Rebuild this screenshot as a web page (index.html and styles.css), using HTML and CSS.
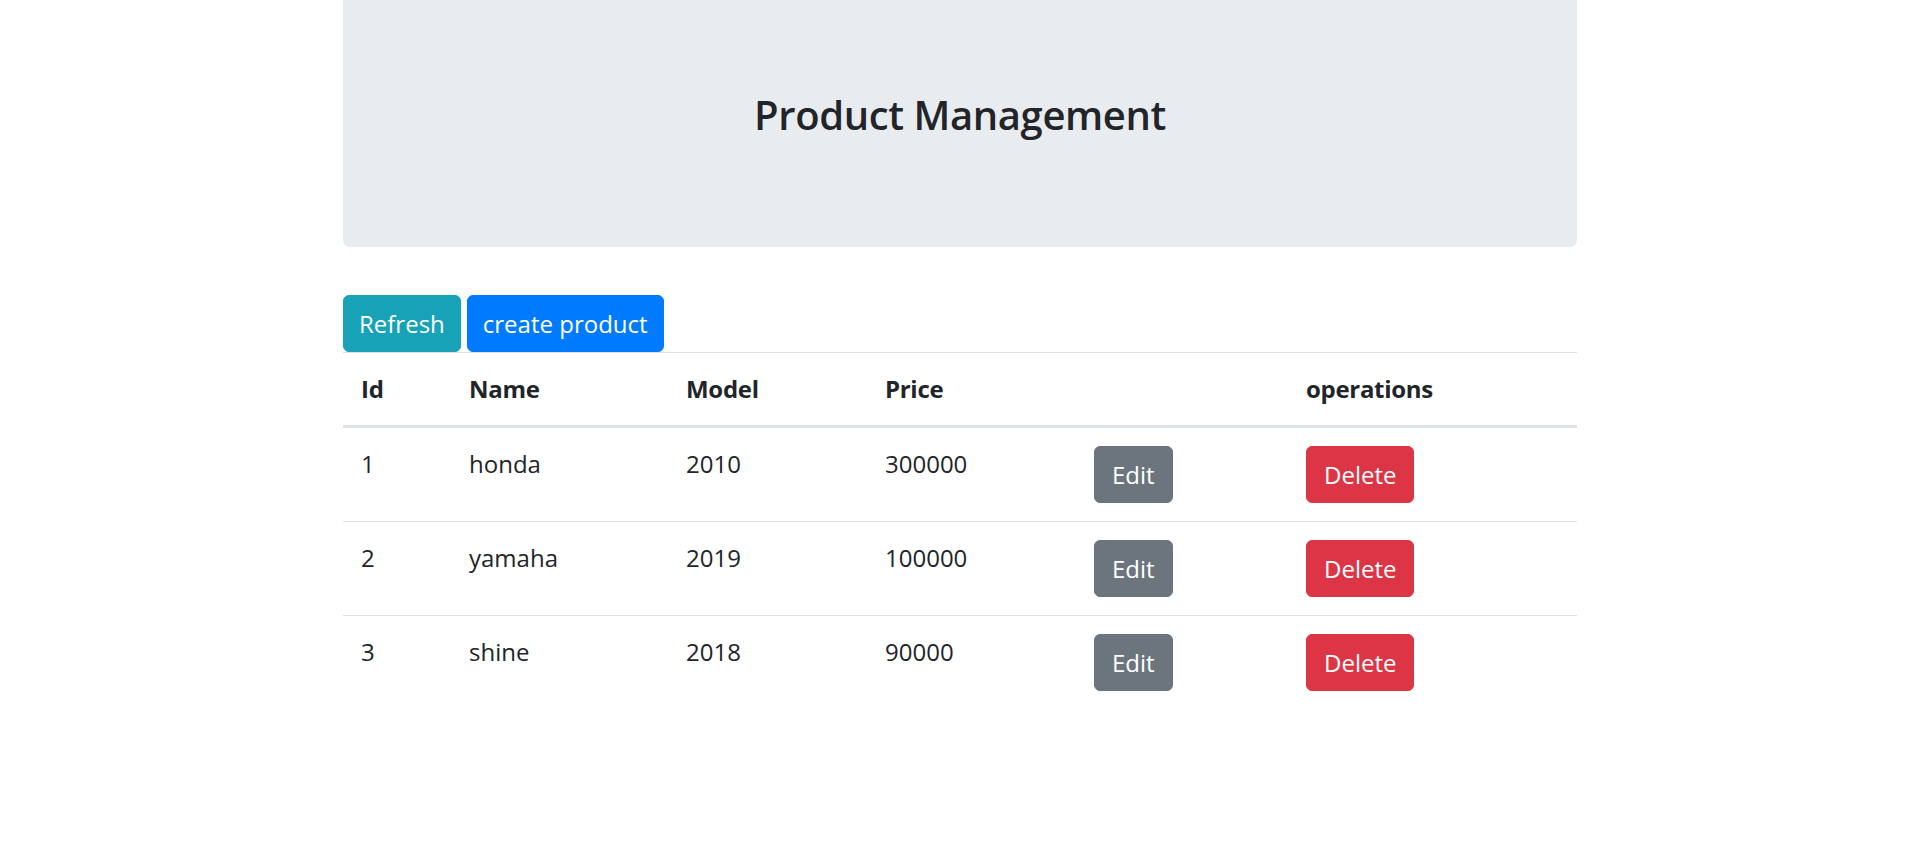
FILE: index.html
```html
<!DOCTYPE html>
<html lang="en">
<head>
<meta charset="utf-8">
<title>Product Management</title>
<link rel="stylesheet" href="styles.css">
</head>
<body>
<div class="container">
  <div class="jumbotron">
    <h3 class="title">Product Management</h3>
  </div>
  <div class="toolbar">
    <button class="btn btn-info">Refresh</button>
    <button class="btn btn-primary">create product</button>
  </div>
  <table class="table">
    <colgroup>
      <col class="c-id"><col class="c-name"><col class="c-model"><col class="c-price"><col class="c-edit"><col class="c-ops">
    </colgroup>
    <thead>
      <tr><th>Id</th><th>Name</th><th>Model</th><th>Price</th><th></th><th>operations</th></tr>
    </thead>
    <tbody>
      <tr><td>1</td><td>honda</td><td>2010</td><td>300000</td><td><button class="btn btn-secondary">Edit</button></td><td><button class="btn btn-danger">Delete</button></td></tr>
      <tr><td>2</td><td>yamaha</td><td>2019</td><td>100000</td><td><button class="btn btn-secondary">Edit</button></td><td><button class="btn btn-danger">Delete</button></td></tr>
      <tr><td>3</td><td>shine</td><td>2018</td><td>90000</td><td><button class="btn btn-secondary">Edit</button></td><td><button class="btn btn-danger">Delete</button></td></tr>
    </tbody>
  </table>
</div>
</body>
</html>
```

FILE: styles.css
```css
* { box-sizing: border-box; }
html, body {
  margin: 0;
  padding: 0;
  background: #fff;
}
body {
  font-family: "Open Sans", "Noto Sans", "Liberation Sans", sans-serif;
  font-size: 24px;
  line-height: 36px;
  color: #212529;
}
.container {
  width: 1234px;
  margin: 0 auto;
}
.jumbotron {
  background: #e9ecef;
  border-radius: 0 0 7px 7px;
  height: 247px;
  padding: 90px 48px 0;
  margin-bottom: 48px;
}
.title {
  margin: 0;
  text-align: center;
  font-size: 40px;
  line-height: 50px;
  font-weight: 600;
  letter-spacing: -0.4px;
  color: #212529;
}
.toolbar {
  display: flex;
  gap: 6px;
}
.btn {
  font-family: inherit;
  font-size: 24px;
  line-height: 36px;
  padding: 9.5px 15px;
  border: 1px solid transparent;
  border-radius: 6px;
  color: #fff;
  cursor: pointer;
  display: inline-block;
}
.btn-info { background: #17a2b8; border-color: #17a2b8; }
.btn-primary { background: #007bff; border-color: #007bff; }
.btn-secondary { background: #6c757d; border-color: #6c757d; }
.btn-danger { background: #dc3545; border-color: #dc3545; }
.table {
  width: 1234px;
  border-collapse: collapse;
  table-layout: fixed;
}
.c-id { width: 108px; }
.c-name { width: 217px; }
.c-model { width: 199px; }
.c-price { width: 209px; }
.c-edit { width: 212px; }
.c-ops { width: 289px; }
.table th, .table td {
  padding: 18px;
  text-align: left;
  vertical-align: top;
  border-top: 1px solid #dee2e6;
}
.table th {
  font-weight: 700;
  letter-spacing: -0.3px;
  vertical-align: bottom;
  border-bottom: 3px solid #dee2e6;
}
.table td .btn {
  vertical-align: top;
  padding-left: 17px;
  padding-right: 17px;
}
```
